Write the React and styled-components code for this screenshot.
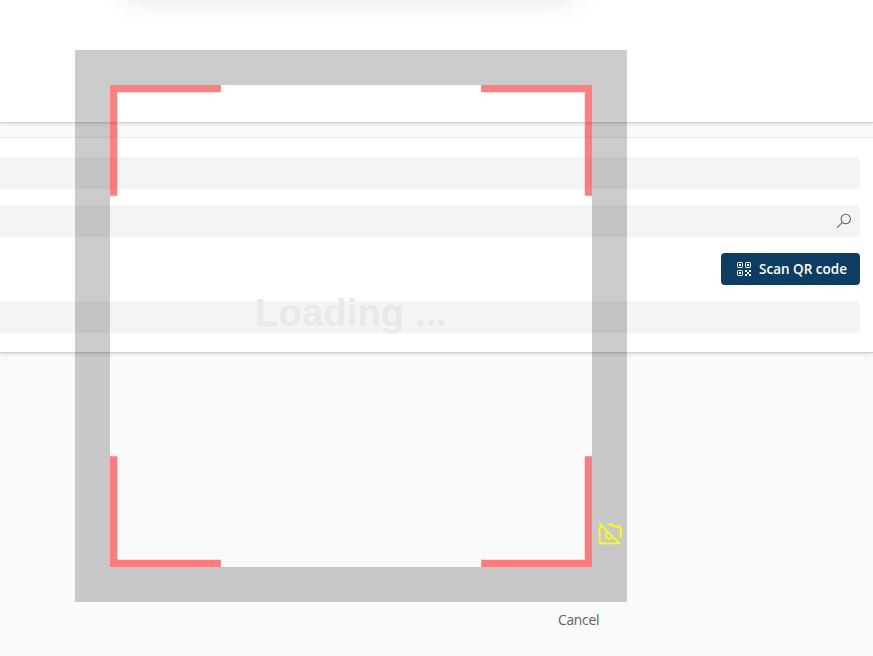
import React from "react";
import styled, { createGlobalStyle } from "styled-components";

const GlobalStyle = createGlobalStyle`
  body {
    margin: 0;
    overflow: hidden;
    background: #fafafa;
    font-family: "Segoe UI", "Open Sans", "Noto Sans", sans-serif;
  }
`;

const Page = styled.main`
  position: relative;
  display: flex;
  flex-direction: column;
  gap: 15px;
  height: 656px;
  overflow: hidden;
  background: #fafafa;
`;

const Header = styled.header`
  height: 122px;
  flex: none;
  background: #fff;
  border-bottom: 1px solid #d2d2d2;
  box-shadow: 0 1px 4px rgba(0, 0, 0, 0.13);
  box-sizing: content-box;
`;

const DialogShadow = styled.div`
  position: absolute;
  top: -60px;
  left: 126px;
  width: 448px;
  height: 46px;
  box-shadow: 0 8px 32px rgba(0, 0, 0, 0.17);
`;

const FormCard = styled.section`
  display: flex;
  flex-direction: column;
  gap: 16px;
  flex: none;
  box-sizing: border-box;
  height: 214px;
  padding: 19px 13px 19px 0;
  background: #fff;
  box-shadow: 0 -1px 0 #ececec, 0 1px 0 #d0d0d0, 0 2px 4px rgba(0, 0, 0, 0.14);
`;

const Field = styled.div`
  display: flex;
  align-items: center;
  justify-content: flex-end;
  height: 32px;
  box-sizing: border-box;
  padding-right: 8px;
  border-radius: 0 4px 4px 0;
  background: #f4f4f4;
`;

const ScanButton = styled.button`
  display: flex;
  align-items: center;
  align-self: flex-end;
  gap: 8px;
  box-sizing: border-box;
  width: 139px;
  height: 32px;
  padding: 0 0 0 16px;
  border: 0;
  border-radius: 4px;
  background: #0d3d63;
  color: #fff;
  font: 600 13.5px/20px "Segoe UI", "Open Sans", sans-serif;
  letter-spacing: 0;
  white-space: nowrap;
`;

const Scanner = styled.div`
  position: absolute;
  top: 50px;
  left: 75px;
  display: grid;
  place-items: center;
  box-sizing: border-box;
  width: 552px;
  height: 552px;
  border: 35px solid rgba(0, 0, 0, 0.2);
`;

const Loading = styled.span`
  color: #e9e9e9;
  font: bold 38.4px/44px "Liberation Sans", Arial, sans-serif;
  transform: translateY(-13px);
  white-space: nowrap;
`;

const Corners = styled.svg`
  position: absolute;
  inset: 0;
  width: 482px;
  height: 482px;
`;

const CameraOff = styled.svg`
  position: absolute;
  left: 488px;
  top: 437px;
`;

const CancelButton = styled.button`
  position: absolute;
  left: 558px;
  top: 610px;
  padding: 0;
  border: 0;
  background: none;
  color: #616161;
  font: 400 13.8px/20px "Segoe UI", "Open Sans", sans-serif;
  letter-spacing: -0.25px;
`;

const SearchIcon = () => (
  <svg width="16" height="16" viewBox="0 0 16 16" fill="none" stroke="#526b90" strokeWidth="1.1">
    <circle cx="9.8" cy="6" r="4.7" />
    <path d="M6.4 9.4 1 14.8" />
  </svg>
);

const QrIcon = () => (
  <svg width="14" height="14" viewBox="0 0 14 14" fill="#fff">
    <g fill="none" stroke="#fff">
      <rect x=".5" y=".5" width="5" height="5" rx=".8" />
      <rect x="8.5" y=".5" width="5" height="5" rx=".8" />
      <rect x=".5" y="8.5" width="5" height="5" rx=".8" />
    </g>
    <path d="M2 2h2v2H2zM10 2h2v2h-2zM2 10h2v2H2zM8 8h2v2H8zM12 8h2v2h-2zM10 10h2v2h-2zM8 12h2v2H8zM12 12h2v2h-2z" />
  </svg>
);

export default function App() {
  return (
    <>
      <GlobalStyle />
      <Page>
        <Header />
        <FormCard>
          <Field />
          <Field><SearchIcon /></Field>
          <ScanButton><QrIcon />Scan QR code</ScanButton>
          <Field />
        </FormCard>
        <DialogShadow />
        <Scanner>
          <Loading>Loading ...</Loading>
          <Corners viewBox="0 0 100 100" fill="none" stroke="rgba(255,0,0,.5)" strokeWidth="3">
            <path d="M23 0H0V23M0 77V100H23M77 100H100V77M100 23V0H77" />
          </Corners>
          <CameraOff width="24" height="24" viewBox="0 0 24 24" fill="none" stroke="#ff0" strokeWidth="1.8">
            <path d="M1.2 1.2 22.3 22.3M3.5 4.8Q1.6 5 1.6 7V19.4Q1.6 21.4 3.6 21.4H21.5M9.4 2.4H14L16 4.7H20.5Q22.7 4.7 22.7 6.9V15.8" />
            <path d="M9.2 10.6A3.4 3.4 0 1 0 14.4 14.6" />
          </CameraOff>
        </Scanner>
        <CancelButton>Cancel</CancelButton>
      </Page>
    </>
  );
}
